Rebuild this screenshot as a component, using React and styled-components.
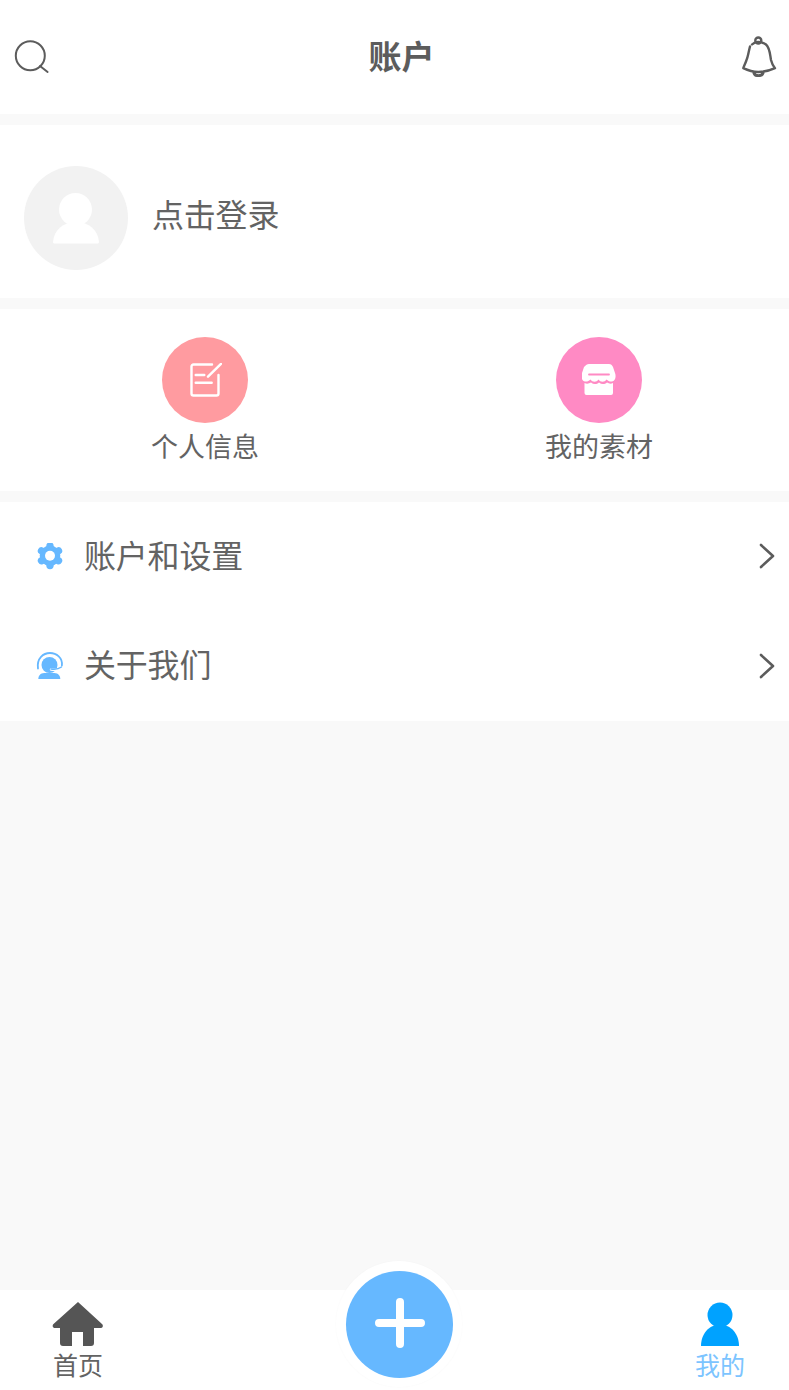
import React from "react";
import styled, { createGlobalStyle } from "styled-components";

const Global = createGlobalStyle`
  html, body { margin: 0; padding: 0; background: #f9f9f9; }
  * { box-sizing: border-box; }
  body { font-family: "Noto Sans CJK SC", "Noto Sans", sans-serif; color: #636363; }
`;
const Page = styled.div`
  position: relative; width: 789px; height: 1390px; display: flex; flex-direction: column;
  background: #f9f9f9; overflow: hidden;
`;
const Header = styled.header`
  height: 114px; flex: none; background: #fff; display: flex; align-items: center;
  justify-content: space-between; padding: 0 11px 3px 13px;
`;
const Title = styled.h1`margin: 0 0 2px 12px; font-size: 33px; line-height: 40px; font-weight: 700; color: #5c5c5c;`;
const Section = styled.section`background: #fff; flex: none; margin-top: 11px; height: ${p => p.$h}px;`;
const Profile = styled(Section)`display: flex; align-items: center; padding: 13px 0 0 24px; gap: 24px;`;
const Avatar = styled.div`
  width: 104px; height: 104px; border-radius: 50%; background: #f2f2f2;
  display: flex; align-items: center; justify-content: center;
`;
const LoginText = styled.span`font-size: 32px; line-height: 40px; color: #636363; margin: 0 0 10px 0; letter-spacing: -0.2px;`;
const Actions = styled(Section)`display: grid; grid-template-columns: 394px 394px; padding: 28px 0 0 8px;`;
const Action = styled.div`display: flex; flex-direction: column; align-items: center;`;
const ActionCircle = styled.div`
  width: 86px; height: 86px; border-radius: 50%; background: ${p => p.$c};
  display: flex; align-items: center; justify-content: center;
`;
const ActionLabel = styled.span`font-size: 27px; line-height: 36px; margin-top: 5px; color: #636363;`;
const List = styled(Section)`display: flex; flex-direction: column;`;
const Row = styled.div`
  height: ${p => p.$h}px; display: flex; align-items: center; padding: 0 13px 0 36px; flex: none;
`;
const RowIcon = styled.div`width: 28px; height: 28px; margin-right: 20px; display: flex; align-items: center; justify-content: center; flex: none;`;
const RowText = styled.span`flex: 1; font-size: 32px; line-height: 40px; color: #636363; margin-bottom: 5px; letter-spacing: -0.2px;`;
const Spacer = styled.div`flex: 1;`;
const TabBar = styled.nav`
  height: 100px; flex: none; background: #fff; display: flex; justify-content: space-between;
  padding: 12px 44px 0 53px;
`;
const Tab = styled.div`display: flex; flex-direction: column; align-items: center; width: 50px;`;
const TabLabel = styled.span`font-size: 25px; line-height: 30px; margin-top: 3px; color: ${p => p.$c}; white-space: nowrap;`;
const Fab = styled.div`
  position: absolute; left: 336px; top: 1261px; width: 126px; height: 126px; border-radius: 50%;
  background: #fff; box-shadow: 0 0 2px rgba(0,0,0,.03); display: flex; align-items: center; justify-content: center;
`;
const FabInner = styled.div`
  width: 107px; height: 107px; border-radius: 50%; background: #66b8ff;
  display: flex; align-items: center; justify-content: center;
`;

const Chevron = () => (
  <svg width="18" height="26" viewBox="0 0 18 26" fill="none" stroke="#5c5c5c" strokeWidth="2.6" strokeLinecap="round" strokeLinejoin="round">
    <path d="M3 2l12 11L3 24" />
  </svg>
);

export default function App() {
  return (
    <Page>
      <Global />
      <Header>
        <svg width="38" height="38" viewBox="0 0 38 38" fill="none" stroke="#5c5c5c" strokeWidth="2" strokeLinecap="round">
          <circle cx="17.3" cy="18.8" r="14.5" />
          <path d="M27 29l7.600 6" />
        </svg>
        <Title>账户</Title>
        <svg width="38" height="42" viewBox="0 0 38 42" fill="none" stroke="#5c5c5c" strokeWidth="2.4" strokeLinecap="round" strokeLinejoin="round">
          <path d="M10 11.500C8.500 17 8 22 6.500 25 5.500 28 4 31 3.300 33.200 8 35.500 13 37 18.300 37 24 37 30 35.500 35 33.200 33 31 32 29 31 25 30 20 30 13 26 9.500 24 8 21 7 18 7 15 7 13 8.500 12 9.500" />
          <circle cx="18.300" cy="5.500" r="3" />
          <path d="M14 38c1 3.500 8 3.500 9 0" strokeWidth="3" />
        </svg>
      </Header>
      <Profile $h={173}>
        <Avatar>
          <svg width="46" height="52" viewBox="0 0 46 52" fill="#fff">
            <circle cx="22.500" cy="17.500" r="16.500" />
            <path d="M0 50C1 38 10 30 23 30s22 8 23 20c0 1-1 1.500-1.500 1.500h-43C1 51.500 0 51 0 50z" />
          </svg>
        </Avatar>
        <LoginText>点击登录</LoginText>
      </Profile>
      <Actions $h={182}>
        <Action>
          <ActionCircle $c="#ff9ba0">
            <svg width="34" height="34" viewBox="0 0 34 34" fill="none" stroke="#fff" strokeWidth="2.4" strokeLinecap="round" strokeLinejoin="round">
              <path d="M24 1.500H5.500a2 2 0 0 0-2 2v27a2 2 0 0 0 2 2h23a2 2 0 0 0 2-2V12" />
              <path d="M20 13.700L33 .800" />
              <path d="M7.700 12h8.600M7.700 19.700h16" />
            </svg>
          </ActionCircle>
          <ActionLabel>个人信息</ActionLabel>
        </Action>
        <Action>
          <ActionCircle $c="#ff8ac4">
            <svg width="34" height="32" viewBox="0 0 34 32" fill="#fff">
              <path d="M7 0h20c2 0 3 1 4 3l2 6c1.500 4 0 8-3 8.500-2 .4-4-.5-5.500-2-2 3-6 3-8 0-2 3-6 3-8 0-1.500 1.500-3.500 2.400-5.500 2-3-.5-4.500-4.500-3-8.500l2-6C4 1 5 0 7 0z" />
              <path d="M2.500 19c2 1 4.500.8 6.500-.5 2.500 2 5.500 2 8 0 2.500 2 5.500 2 8 0 2 1.300 4 1.500 6 .5v10a2 2 0 0 1-2 2H4.500a2 2 0 0 1-2-2z" />
              <path d="M7 10.500h20" fill="none" stroke="#ff8ac4" strokeWidth="1.800" strokeLinecap="round" />
            </svg>
          </ActionCircle>
          <ActionLabel>我的素材</ActionLabel>
        </Action>
      </Actions>
      <List $h={219}>
        <Row $h={108}>
          <RowIcon>
            <svg width="27" height="27" viewBox="0 0 27 27">
              <g transform="translate(13 12.800)">
                <circle r="10.300" fill="#66b8ff" />
                <g stroke="#66b8ff" strokeWidth="7.400" strokeLinecap="round">
                  <path d="M0-9.800V9.800" />
                  <path d="M-8.500-4.900L8.500 4.900" />
                  <path d="M-8.500 4.900L8.500-4.900" />
                </g>
                <circle r="5" fill="#fff" />
              </g>
            </svg>
          </RowIcon>
          <RowText>账户和设置</RowText>
          <Chevron />
        </Row>
        <Row $h={111}>
          <RowIcon>
            <svg width="28" height="28" viewBox="0 0 28 28" fill="none" stroke="#66b8ff" strokeLinecap="round">
              <path d="M2 16.500C.5 6 7.500 1 14 1S26.800 6 25.900 13.500" strokeWidth="1.800" />
              <circle cx="13.500" cy="13" r="8" fill="#66b8ff" stroke="none" />
              <path d="M2.300 27c0-3 2-6 6-6h10c4 0 6 3 6 6z" fill="#66b8ff" stroke="none" />
              <path d="M15 17.500c3.500 .500 7.500 .2 10.500-1.500" stroke="#fff" strokeWidth="2.400" />
              <path d="M15 17c3.500 .500 7.500 .2 10.500-2" strokeWidth="1.500" />
            </svg>
          </RowIcon>
          <RowText>关于我们</RowText>
          <Chevron />
        </Row>
      </List>
      <Spacer />
      <TabBar>
        <Tab>
          <svg width="52" height="44" viewBox="0 0 52 44" fill="#555">
            <path d="M26 0L50 22c1.500 1.500 1 4-1.500 4H42v15a3 3 0 0 1-3 3H31V30H20v14h-9a3 3 0 0 1-3-3V26H3c-2.500 0-3-2.500-1.500-4z" />
          </svg>
          <TabLabel $c="#636363">首页</TabLabel>
        </Tab>
        <Tab>
          <svg width="40" height="44" viewBox="0 0 40 44" fill="#00a2ff">
            <circle cx="20" cy="13" r="12.500" />
            <path d="M1 44C1 32 9 22.500 20 22.500S39 32 39 44z" />
          </svg>
          <TabLabel $c="#7cc4ff">我的</TabLabel>
        </Tab>
      </TabBar>
      <Fab>
        <FabInner>
          <svg width="52" height="52" viewBox="0 0 52 52" stroke="#fff" strokeWidth="8" strokeLinecap="round">
            <path d="M27 4v42M6 25h42" />
          </svg>
        </FabInner>
      </Fab>
    </Page>
  );
}
